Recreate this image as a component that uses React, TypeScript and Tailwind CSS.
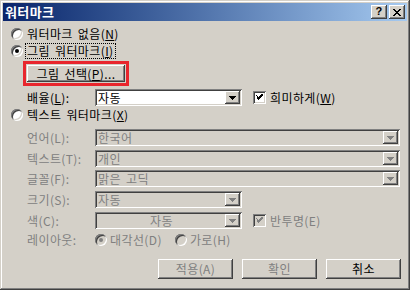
import type { ReactNode } from "react";

const raised =
  "shadow-[inset_-1px_-1px_#404040,inset_1px_1px_#fff,inset_-2px_-2px_#808080,inset_2px_2px_#d4d0c8]";
const sunken =
  "shadow-[inset_1px_1px_#808080,inset_-1px_-1px_#fff,inset_2px_2px_#404040,inset_-2px_-2px_#d4d0c8]";

function Radio({ checked = false, disabled = false }: { checked?: boolean; disabled?: boolean }) {
  return (
    <span
      className={`relative shrink-0 w-[12px] h-[12px] rounded-full ${disabled ? "bg-[#d4d0c8]" : "bg-white"} shadow-[inset_1px_1px_#808080,inset_-1px_-1px_#fff,inset_2px_2px_#404040,inset_-2px_-2px_#d4d0c8]`}
    >
      {checked && (
        <span
          className={`absolute left-[4px] top-[4px] w-[4px] h-[4px] rounded-full ${disabled ? "bg-[#808080]" : "bg-black"}`}
        />
      )}
    </span>
  );
}

function Check({ disabled = false }: { disabled?: boolean }) {
  return (
    <span
      className={`shrink-0 w-[13px] h-[13px] flex items-center justify-center ${disabled ? "bg-[#d4d0c8]" : "bg-white"} ${sunken}`}
    >
      <svg width="7" height="7" viewBox="0 0 7 7" shapeRendering="crispEdges">
        <path
          d="M0 2h1v3h1v1h1v-1h1v-1h1v-1h1v-1h1v-3h-1v1h-1v1h-1v1h-1v1h-1v-1h-1v-1h-1z"
          fill={disabled ? "#808080" : "#000"}
        />
      </svg>
    </span>
  );
}

function Combo({
  value,
  w,
  disabled = false,
  center = false,
}: {
  value: string;
  w: string;
  disabled?: boolean;
  center?: boolean;
}) {
  return (
    <div
      className={`${w} h-[17px] flex items-stretch p-[2px] ${disabled ? "bg-[#d4d0c8] text-[#808080]" : "bg-white text-black"} ${sunken}`}
    >
      <span className={`flex-1 pl-px leading-[13px] ${center ? "text-center" : ""}`}>{value}</span>
      <span className={`w-[15px] bg-[#d4d0c8] flex items-end justify-center pb-[4px] ${raised}`}>
        <svg width="7" height="4" viewBox="0 0 7 4" shapeRendering="crispEdges">
          <path d="M0 0h7v1h-1v1h-1v1h-1v1h-1v-1h-1v-1h-1v-1h-1z" fill={disabled ? "#808080" : "#000"} />
        </svg>
      </span>
    </div>
  );
}

function Row({ label, children, cls = "mt-[4px]" }: { label: string; children: ReactNode; cls?: string }) {
  return (
    <div className={`${cls} ml-[16px] h-[17px] flex items-center`}>
      <span className="w-[68px] text-[#808080]">{label}</span>
      {children}
    </div>
  );
}

function DlgButton({ children, disabled = false }: { children: ReactNode; disabled?: boolean }) {
  return (
    <div
      className={`w-[75px] h-[20px] flex items-center justify-center bg-[#d4d0c8] ${raised} ${disabled ? "text-[#808080]" : "text-black"}`}
    >
      {children}
    </div>
  );
}

export default function App() {
  return (
    <div className="w-[410px] h-[290px] bg-[#d4d0c8] p-[3px] flex flex-col font-['Noto_Sans_CJK_KR','Noto_Sans',sans-serif] text-[12px] leading-[16px] tracking-[0.4px] [word-spacing:2px] text-black shadow-[inset_-1px_-1px_#404040,inset_1px_1px_#d4d0c8,inset_-2px_-2px_#808080,inset_2px_2px_#fff]">
      {/* title bar */}
      <div className="h-[18px] flex items-center justify-between pl-[2px] pr-[2px] bg-linear-to-r from-[#0a246a] to-[#a6caf0]">
        <span className="font-bold text-white text-[13px] leading-[18px]">워터마크</span>
        <div className="flex gap-[2px]">
          <div className={`w-[16px] h-[14px] bg-[#d4d0c8] flex items-center justify-center ${raised}`}>
            <span className="font-['Liberation_Sans',sans-serif] font-bold text-[11px] leading-none pb-px">?</span>
          </div>
          <div className={`w-[16px] h-[14px] bg-[#d4d0c8] flex items-center justify-center ${raised}`}>
            <svg width="8" height="7" viewBox="0 0 8 7" shapeRendering="crispEdges">
              <path
                d="M0 0h2v1h1v1h2v-1h1v-1h2v1h-1v1h-1v1h-1v1h1v1h1v1h1v1h-2v-1h-1v-1h-2v1h-1v1h-2v-1h1v-1h1v-1h1v-1h-1v-1h-1v-1h-1z"
                fill="#000"
              />
            </svg>
          </div>
        </div>
      </div>

      {/* body */}
      <div className="flex flex-col pl-[8px] pr-[6px]">
        <div className="mt-[5px] h-[16px] flex items-center gap-[4px]">
          <Radio />
          <span>
            워터마크 없음(<u>N</u>)
          </span>
        </div>
        <div className="mt-px h-[16px] flex items-center gap-[2px]">
          <Radio checked />
          <span className="border border-dotted border-black px-px leading-[14px]">
            그림 워터마크(<u>I</u>)
          </span>
        </div>
        <div className="mt-[2px] ml-[12px] w-[106px] h-[25px] border-[3px] border-[#e8262d] p-px">
          <div className={`h-full flex items-center justify-center bg-[#d4d0c8] ${raised}`}>
            그림 선택(<u>P</u>)...
          </div>
        </div>
        <div className="mt-[3px] ml-[16px] h-[17px] flex items-center">
          <span className="w-[68px]">
            배율(<u>L</u>):
          </span>
          <Combo value="자동" w="w-[147px]" />
          <div className="ml-[11px] flex items-center gap-[4px]">
            <Check />
            <span>
              희미하게(<u>W</u>)
            </span>
          </div>
        </div>
        <div className="mt-px h-[16px] flex items-center gap-[4px]">
          <Radio />
          <span>
            텍스트 워터마크(<u>X</u>)
          </span>
        </div>
        <Row label="언어(L):" cls="mt-[6px]">
          <Combo value="한국어" w="w-[305px]" disabled />
        </Row>
        <Row label="텍스트(T):">
          <Combo value="개인" w="w-[305px]" disabled />
        </Row>
        <Row label="글꼴(F):" cls="mt-[3px]">
          <Combo value="맑은 고딕" w="w-[305px]" disabled />
        </Row>
        <Row label="크기(S):">
          <Combo value="자동" w="w-[147px]" disabled />
        </Row>
        <Row label="색(C):">
          <Combo value="자동" w="w-[147px]" disabled center />
          <div className="ml-[11px] flex items-center gap-[4px] text-[#808080]">
            <Check disabled />
            <span>반투명(E)</span>
          </div>
        </Row>
        <div className="mt-[3px] ml-[16px] h-[16px] flex items-center text-[#808080]">
          <span className="w-[68px]">레이아웃:</span>
          <Radio checked disabled />
          <span className="ml-[3px]">대각선(D)</span>
          <span className="ml-[13px] flex items-center">
            <Radio disabled />
          </span>
          <span className="ml-[3px]">가로(H)</span>
        </div>
        <div className="mt-[11px] flex justify-end gap-[9px]">
          <DlgButton disabled>적용(A)</DlgButton>
          <DlgButton disabled>확인</DlgButton>
          <DlgButton>취소</DlgButton>
        </div>
      </div>
    </div>
  );
}
